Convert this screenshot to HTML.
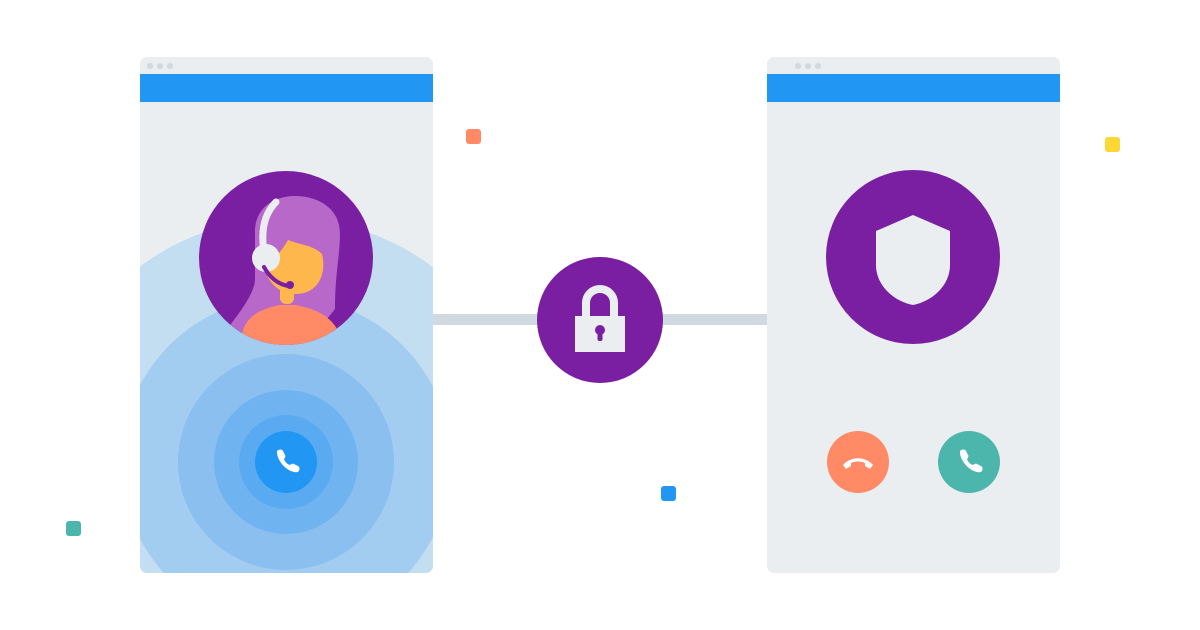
<!DOCTYPE html><html style="overflow:hidden;height:630px"><head><style>body{margin:0;width:1200px;height:630px;background:#fff;position:relative;overflow:hidden}
.p{position:absolute;top:57px;width:293px;height:516px;background:#eaeef1;border-radius:7px;overflow:hidden}
.bar{position:absolute;top:17px;left:0;right:0;height:28px;background:#2196f3}
.dot{position:absolute;top:6px;width:6px;height:6px;border-radius:50%;background:#d2d8dd}
.sq{position:absolute;width:15px;height:15px;border-radius:3px}
</style></head><body>
<div style="position:absolute;left:430px;top:314px;width:340px;height:11px;background:#d0d9df"></div>
<div class="p" style="left:140px">
<svg width="293" height="516" style="position:absolute;left:0;top:0">
<circle cx="146" cy="405" r="244" fill="#c3def1"/>
<circle cx="146" cy="405" r="165" fill="#a3cdf0"/>
<circle cx="146" cy="405" r="108" fill="#8abfef"/>
<circle cx="146" cy="405" r="72" fill="#6fb4f1"/>
<circle cx="146" cy="405" r="47" fill="#5aaaf1"/>
<circle cx="146" cy="405" r="31" fill="#2196f3"/>
<path d="M137 394c2-2 5-2 6 0l2 4c1 1 0 3-1 4 1 3 3 5 6 6 1-1 3-2 4-1l4 2c2 1 2 4 0 6-9 2-22-11-21-21z" fill="#fff"/>
<defs><clipPath id="c"><circle cx="146" cy="201" r="87"/></clipPath></defs>
<circle cx="146" cy="201" r="87" fill="#7b1fa2"/>
<g clip-path="url(#c)">
<path d="M115 175c0-25 20-36 40-36s45 10 45 38c0 20-5 40-5 75l-40 50-90 0c20-30 50-60 50-80z" fill="#b868c8"/>
<path d="M148 183c12 5 25 5 34 14c5 20-4 40-26 40c-20 0-30-15-32-30c6 0 16-10 24-24z" fill="#fdb74d"/>
<rect x="140" y="225" width="14" height="22" rx="6" fill="#fdb74d"/>
<path d="M100 300c0-30 5-45 40-52h16c35 7 45 22 50 52z" fill="#ff8a65"/>
</g>
<path d="M124 195c-4-25 2-40 12-50" stroke="#eaeef1" stroke-width="7" fill="none" stroke-linecap="round"/>
<circle cx="126" cy="201" r="14" fill="#eaeef1"/>
<path d="M124 210c6 11 14 17 24 19" stroke="#7b1fa2" stroke-width="4" fill="none" stroke-linecap="round"/>
<circle cx="150" cy="228" r="4" fill="#7b1fa2"/>
</svg>
<div class="bar"></div><div class="dot" style="left:7px"></div><div class="dot" style="left:17px"></div><div class="dot" style="left:27px"></div></div>
<div class="p" style="left:767px">
<div class="bar"></div><div class="dot" style="left:28px"></div><div class="dot" style="left:38px"></div><div class="dot" style="left:48px"></div>
<svg width="293" height="516" style="position:absolute;left:0;top:0">
<circle cx="146" cy="200" r="87" fill="#7b1fa2"/>
<path d="M146 158l37 16v34c0 20-17 36-37 40c-20-4-37-20-37-40v-34z" fill="#eaeef1"/>
<circle cx="91" cy="405" r="31" fill="#ff8a65"/>
<path d="M76 408c8-9 22-9 30 0l-3 4-5-3v-3c-4-2-10-2-14 0v3l-5 3z" fill="#fff"/>
<circle cx="202" cy="405" r="31" fill="#4db6ac"/>
<path d="M193 394c2-2 5-2 6 0l2 4c1 1 0 3-1 4 1 3 3 5 6 6 1-1 3-2 4-1l4 2c2 1 2 4 0 6-9 2-22-11-21-21z" fill="#fff"/>
</svg></div>
<svg width="130" height="130" style="position:absolute;left:535px;top:255px">
<circle cx="65" cy="65" r="63" fill="#7b1fa2"/>
<path d="M51 62v-14a14 14 0 0 1 28 0v14" stroke="#eaeef1" stroke-width="8" fill="none"/>
<rect x="40" y="61" width="50" height="36" fill="#eaeef1"/>
<circle cx="65" cy="75" r="5" fill="#7b1fa2"/><rect x="62.5" y="75" width="5" height="11" rx="2" fill="#7b1fa2"/>
</svg>
<div class="sq" style="left:466px;top:129px;background:#ff8a65"></div>
<div class="sq" style="left:1105px;top:137px;background:#fdd835"></div>
<div class="sq" style="left:661px;top:486px;background:#2196f3"></div>
<div class="sq" style="left:66px;top:521px;background:#4db6ac"></div>
</body></html>
